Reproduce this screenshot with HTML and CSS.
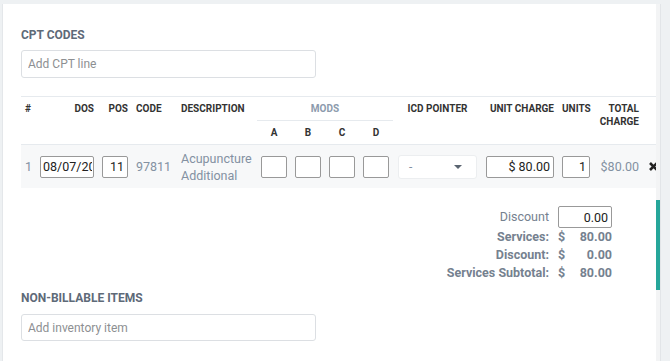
FILE: index.html
```html
<!DOCTYPE html>
<html lang="en">
<head>
    <meta charset="UTF-8">
    <meta name="viewport" content="width=device-width, initial-scale=1.0">
    <title>Billing - CPT Codes</title>
    <link rel="stylesheet" href="styles.css">
</head>
<body>
    <div class="page">
        <div class="card">
            <h2 class="section-title">CPT Codes</h2>
            <input class="search-input" type="text" placeholder="Add CPT line">

            <table class="cpt-table">
                <colgroup>
                    <col style="width:15px"><col style="width:62px"><col style="width:34px"><col style="width:45px">
                    <col style="width:80px"><col style="width:34px"><col style="width:34px"><col style="width:34px">
                    <col style="width:34px"><col style="width:89px"><col style="width:76px"><col style="width:36px">
                    <col style="width:49px"><col style="width:17px">
                </colgroup>
                <thead>
                    <tr>
                        <th rowspan="2" class="left">#</th>
                        <th rowspan="2" class="right">DOS</th>
                        <th rowspan="2" class="right">POS</th>
                        <th rowspan="2" class="left">CODE</th>
                        <th rowspan="2" class="left">DESCRIPTION</th>
                        <th colspan="4" class="mods">MODS</th>
                        <th rowspan="2" class="center">ICD POINTER</th>
                        <th rowspan="2" class="right">UNIT CHARGE</th>
                        <th rowspan="2" class="right">UNITS</th>
                        <th rowspan="2" class="right">TOTAL CHARGE</th>
                        <th rowspan="2"></th>
                    </tr>
                    <tr>
                        <th class="center sub">A</th>
                        <th class="center sub">B</th>
                        <th class="center sub">C</th>
                        <th class="center sub">D</th>
                    </tr>
                </thead>
                <tbody>
                    <tr class="line">
                        <td class="muted">1</td>
                        <td><input class="cell-input date" type="text" value="08/07/2026"></td>
                        <td><input class="cell-input num" type="text" value="11"></td>
                        <td class="muted">97811</td>
                        <td class="muted desc">Acupuncture Additional</td>
                        <td><input class="cell-input" type="text"></td>
                        <td><input class="cell-input" type="text"></td>
                        <td><input class="cell-input" type="text"></td>
                        <td><input class="cell-input" type="text"></td>
                        <td>
                            <div class="select">
                                <span>-</span>
                                <span class="caret"></span>
                            </div>
                        </td>
                        <td><input class="cell-input num" type="text" value="$ 80.00"></td>
                        <td><input class="cell-input num" type="text" value="1"></td>
                        <td class="muted right">$80.00</td>
                        <td class="remove">
                            <svg width="9" height="9" viewBox="0 0 9 9">
                                <path d="M1 1 L8 8 M8 1 L1 8" stroke="#222" stroke-width="2.6" stroke-linecap="butt"/>
                            </svg>
                        </td>
                    </tr>
                </tbody>
            </table>

            <div class="totals">
                <span class="t-label plain">Discount</span>
                <input class="cell-input num discount" type="text" value="0.00">
                <span class="t-label">Services:</span><span class="t-cur">$</span><span class="t-val">80.00</span>
                <span class="t-label">Discount:</span><span class="t-cur">$</span><span class="t-val">0.00</span>
                <span class="t-label">Services Subtotal:</span><span class="t-cur">$</span><span class="t-val">80.00</span>
            </div>

            <h2 class="section-title second">Non-Billable Items</h2>
            <input class="search-input inv" type="text" placeholder="Add inventory item">
        </div>
        <div class="scrollbar">
            <div class="thumb"></div>
        </div>
    </div>
</body>
</html>
```

FILE: styles.css
```css
html, body {
    height: 100%;
    overflow: hidden;
}

body {
    font-family: Roboto, "Liberation Sans", Arial, sans-serif;
    margin: 0;
    padding: 0;
    background-color: #eef1f3;
    color: #333;
}

.page {
    display: flex;
    padding: 4px 0 0 2px;
    height: 100%;
    box-sizing: border-box;
}

.card {
    width: 654px;
    flex: none;
    background-color: #fff;
    border-left: 1px solid #e4e7ea;
    box-sizing: border-box;
    padding: 23px 0 0 18px;
    overflow: hidden;
}

.scrollbar {
    width: 4px;
    flex: none;
    background-color: #f3f4f5;
    border-right: 1px solid #e2e5e8;
    display: flex;
    flex-direction: column;
}

.thumb {
    margin-top: 196px;
    height: 90px;
    background-color: #26a69a;
}

.section-title {
    margin: 0;
    font-size: 12px;
    font-weight: 700;
    text-transform: uppercase;
    color: #5e6a78;
    line-height: 16px;
}

.section-title.second {
    margin-top: 8px;
}

.search-input {
    display: block;
    width: 295px;
    height: 28px;
    margin-top: 7px;
    box-sizing: border-box;
    border: 1px solid #dcdfe3;
    border-radius: 3px;
    padding: 0 6px;
    font-family: inherit;
    font-size: 12px;
    color: #333;
    outline: none;
}

.search-input::placeholder {
    color: #8d8f92;
}

.search-input.inv {
    height: 27px;
    margin-top: 8px;
}

.cpt-table {
    margin-top: 18px;
    width: 639px;
    table-layout: fixed;
    border-collapse: collapse;
    border-top: 1px solid #e6eaee;
}

.cpt-table th {
    font-size: 10px;
    font-weight: 700;
    color: #333;
    vertical-align: top;
    padding: 5px 4px 0;
    line-height: 13px;
    white-space: normal;
}

.cpt-table thead tr:first-child th {
    height: 18px;
}

.cpt-table thead tr:last-child th {
    border-bottom: 1px solid #e6eaee;
    height: 18px;
    padding-top: 5px;
}

.cpt-table thead tr:first-child th[rowspan] {
    border-bottom: 1px solid #e6eaee;
}

.cpt-table th.mods {
    color: #8c9bad;
    text-align: center;
    border-bottom: 1px solid #e6eaee;
}

.left { text-align: left; }
.right { text-align: right; }
.center { text-align: center; }

.cpt-table td {
    padding: 0 4px;
    height: 43px;
    font-size: 12.5px;
    vertical-align: middle;
}

.line {
    background-color: #f7f8f9;
}

.muted {
    color: #8391a2;
}

.desc {
    line-height: 17px;
}

.cell-input {
    display: block;
    width: 100%;
    height: 22px;
    box-sizing: border-box;
    border: 1px solid #999;
    border-radius: 2px;
    padding: 0 3px;
    font-family: inherit;
    font-size: 12.5px;
    color: #222;
    background: #fff;
    outline: none;
}

.cell-input.date {
    padding: 0 1px 0 2px;
}

.cell-input.num {
    text-align: right;
}

.select {
    display: flex;
    align-items: center;
    justify-content: space-between;
    height: 22px;
    margin: 0 1px;
    padding: 0 14px 0 10px;
    border: 1px solid #eceef0;
    border-radius: 3px;
    background: #fff;
    color: #8391a2;
    font-size: 12px;
}

.caret {
    width: 0;
    height: 0;
    border-left: 4px solid transparent;
    border-right: 4px solid transparent;
    border-top: 4px solid #5a6470;
}

.remove {
    padding: 0 0 0 6px !important;
}

.remove svg {
    display: block;
}

.totals {
    display: grid;
    grid-template-columns: auto 12px 42px;
    justify-content: end;
    column-gap: 0;
    margin: 18px 44px 0 0;
    font-size: 12.5px;
    line-height: 18px;
}

.t-label {
    text-align: right;
    font-weight: 700;
    color: #75818f;
    padding-right: 9px;
}

.t-label.plain {
    font-weight: 400;
    line-height: 22px;
}

.t-cur {
    font-weight: 700;
    color: #75818f;
}

.t-val {
    text-align: right;
    font-weight: 700;
    color: #75818f;
}

.discount {
    grid-column: 2 / span 2;
    height: 22px;
    width: 54px;
    justify-self: end;
}
```
